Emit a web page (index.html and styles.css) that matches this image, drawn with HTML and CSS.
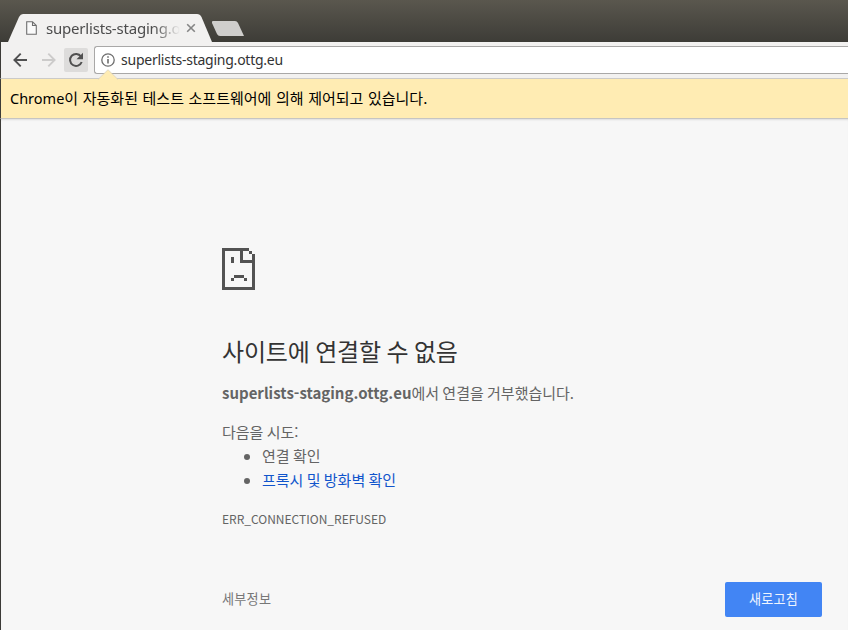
FILE: index.html
```html
<!DOCTYPE html>
<html lang="ko">
<head>
<meta charset="utf-8">
<title>superlists-staging.ottg.eu</title>
<link rel="stylesheet" href="styles.css">
</head>
<body>
<div class="window">
  <header class="tabstrip">
    <svg class="tab-shapes" width="260" height="42" viewBox="0 0 260 42">
      <path d="M8 42 L19 17 Q20.5 14 23 14 H197 Q200 14 201.5 17 L212 42Z" fill="#f2f1f0"/>
      <path d="M213 21 H235 Q237 21 238 23 L244 36 H220 Q218 36 217 34 L212 23 Q211.500 21 213 21Z" fill="#cfcecc"/>
    </svg>
    <div class="tab">
      <svg class="doc" width="11" height="14" viewBox="0 0 11 14"><path d="M1 .7H6.500L10.300 4.500V13.300H.7V.7Z M6.500 .7V4.500H10.300" fill="#fafafa" stroke="#6e6e6e" stroke-width="1.100"/></svg>
      <span class="tab-title">superlists-staging.ottg.eu</span>
      <svg class="close" width="10" height="10" viewBox="0 0 10 10"><path d="M1.200 1.200 8.800 8.800M8.800 1.200 1.200 8.800" stroke="#858585" stroke-width="1.600"/></svg>
    </div>
  </header>
  <nav class="toolbar">
    <svg class="nav-icon" width="24" height="24" viewBox="0 0 24 24"><path d="M19 12H6.500M12.700 5.700 6.400 12l6.300 6.300" fill="none" stroke="#505050" stroke-width="1.900"/></svg>
    <svg class="nav-icon" width="24" height="24" viewBox="0 0 24 24"><path d="M6 12H18.500M12.300 5.700 18.600 12 12.300 18.300" fill="none" stroke="#cccbca" stroke-width="1.900"/></svg>
    <svg class="nav-icon reload" width="24" height="24" viewBox="0 0 24 24"><path d="M17 8.500A6 6 0 1 0 17.700 14" fill="none" stroke="#505050" stroke-width="2"/><path d="M19 4.800V11.300H12.500Z" fill="#505050"/></svg>
    <div class="omnibox">
      <svg width="14" height="14" viewBox="0 0 14 14"><circle cx="7" cy="7" r="6.200" fill="none" stroke="#6e6e6e" stroke-width="1.300"/><path d="M6.200 3.300h1.600v1.500H6.200zM6.200 6h1.600v4.600H6.200z" fill="#6e6e6e"/></svg>
      <span class="url">superlists-staging.ottg.eu</span>
    </div>
  </nav>
  <div class="infobar">
    <svg class="pointer" width="20" height="11" viewBox="0 0 20 11"><path d="M0 10.500 10 .7 20 10.500V11H0Z" fill="#ffecb3"/><path d="M0 10.500 10 .7 20 10.500" fill="none" stroke="#d6cfba" stroke-width=".7"/></svg>
    <span class="info-latin">Chrome</span><span class="info-text">이 자동화된 테스트 소프트웨어에 의해 제어되고 있습니다.</span>
  </div>
  <main class="page">
    <svg class="sad" width="33" height="42" viewBox="0 0 33 42" shape-rendering="crispEdges"><path fill="#535353" d="M0 0H27V3H30V6H33V42H0ZM3 3V39H30V15H18V3ZM21 3V12H30V6H27V3ZM9 9h3v6H9zM12 27h10v3H12zM9 30h3v3H9zM22 30h3v3h-3z"/></svg>
    <h1>사이트에 연결할 수 없음</h1>
    <p class="summary"><strong>superlists-staging.ottg.eu</strong>에서 연결을 거부했습니다.</p>
    <p class="try">다음을 시도:</p>
    <ul>
      <li>연결 확인</li>
      <li><a>프록시 및 방화벽 확인</a></li>
    </ul>
    <p class="code">ERR_CONNECTION_REFUSED</p>
    <div class="actions">
      <span class="details">세부정보</span>
      <button>새로고침</button>
    </div>
  </main>
</div>
</body>
</html>
```
FILE: styles.css
```css
* { box-sizing: border-box; }
body { margin: 0; background: #f7f7f7; font-family: "Noto Sans CJK KR", sans-serif; }
.window { height: 630px; overflow: hidden; background: #f7f7f7; }
.tabstrip { position: relative; height: 42px; background: linear-gradient(#5a574e, #3d3c37); }
.tab-shapes { position: absolute; left: 0; top: 0; }
.tab { position: relative; display: flex; align-items: center; height: 42px; padding: 14px 0 0 26px; }
.doc { flex: none; }
.tab-title {
  width: 134px; margin: -1px 0 0 9px; overflow: hidden; white-space: nowrap;
  font: 15px/24px "Noto Sans", sans-serif; letter-spacing: -.2px; color: #4c4c4c;
  mask-image: linear-gradient(to right, #000 108px, transparent 134px);
}
.close { margin-left: 6px; }
.toolbar { display: flex; align-items: center; height: 36px; padding-left: 7px; background: #f2f1f0; border-left: 1px solid #3c3b37; }
.nav-icon { flex: none; margin-right: 4px; }
.reload { margin-right: 6px; background: #dddcdb; border-radius: 2px; }
.omnibox {
  flex: 1; display: flex; align-items: center; height: 28px; padding-left: 6px;
  background: #fff; border: 1px solid #a9a8a7; border-right: 0; border-radius: 3px 0 0 3px;
}
.url { margin-left: 6px; font: 14px/22px "Noto Sans", sans-serif; letter-spacing: -.24px; color: #333; }
.infobar {
  position: relative; display: flex; align-items: center; height: 41px; padding: 0 0 2px 9px;
  background: #ffecb3; border-top: 1px solid #cbcac8; border-bottom: 1px solid #c6c5c2;
  border-left: 1px solid #3c3b37; color: #000; font-size: 15px; white-space: nowrap;
}
.pointer { position: absolute; left: 97px; top: -10px; }
.info-latin { font-family: "Noto Sans", sans-serif; font-size: 14.500px; }
.info-text { word-spacing: .4px; }
.page { height: 511px; padding: 129px 26px 0 221px; border-left: 1px solid #3c3b37; box-shadow: inset 0 2px 2px -1px #ddd; color: #646464; font-size: 15px; line-height: 24px; word-spacing: -.9px; }
.sad { display: block; }
h1 { margin: 43px 0 0; font-size: 24px; line-height: 36px; font-weight: 400; letter-spacing: -.2px; color: #333; }
p { margin: 0; }
.summary { margin-top: 12px; }
.try { margin-top: 15px; }
ul { margin: 0; padding-left: 40px; }
a { color: #1155cc; }
.code { margin-top: 15px; font-size: 12px; }
.actions { display: flex; justify-content: space-between; align-items: center; margin-top: 51px; height: 35px; }
.details { margin-top: -1px; font-size: 13.125px; letter-spacing: .25px; color: #777; }
button { width: 97px; height: 35px; padding: 0 0 1px; border: 0; border-radius: 2px; background: #4285f4; color: #f0f5fe; font: 13.125px/20px "Noto Sans CJK KR", sans-serif; letter-spacing: .25px; }
```
